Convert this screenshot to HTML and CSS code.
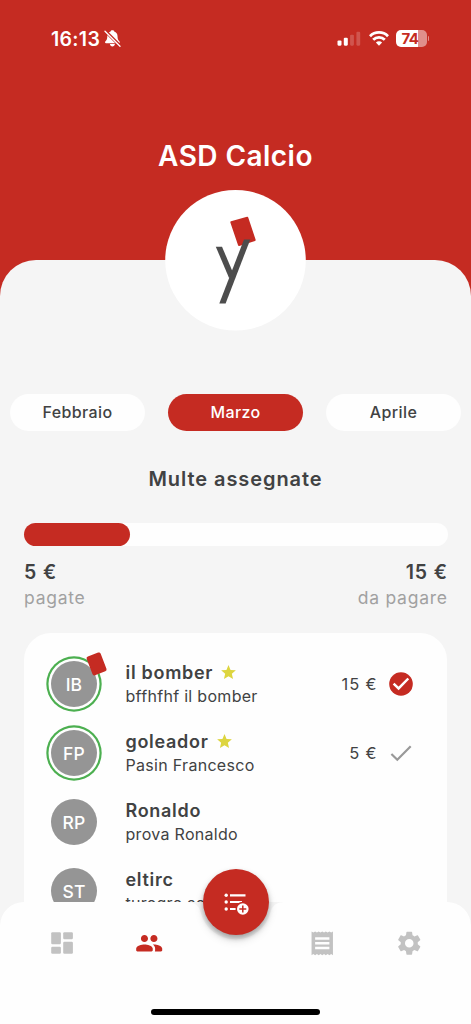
FILE: index.html
```html
<!DOCTYPE html>
<html lang="it">
<head>
<meta charset="utf-8">
<meta name="viewport" content="width=device-width, initial-scale=1">
<title>ASD Calcio</title>
<link rel="stylesheet" href="styles.css">
</head>
<body>
<div class="app">
  <header class="header">
    <div class="status">
      <div class="status-left">
        <span class="clock">16:13</span>
        <svg width="17" height="17" viewBox="0 0 17 17">
          <path fill="#fff" d="M8.4.3c1 0 1.700.5 1.800 1.300 2.100.7 3.300 2.400 3.300 4.500 0 3.200.7 4.200 2 5.400.6.600.2 1.700-.7 1.700H2c-.9 0-1.300-1.100-.7-1.700 1.300-1.200 2-2.200 2-5.400 0-2.100 1.200-3.800 3.300-4.500C6.700.8 7.400.3 8.400.3zM5.900 14.100h5c-.2 1.400-1.200 2.300-2.500 2.300s-2.300-.9-2.500-2.300z"/>
          <path stroke="#c52b22" stroke-width="3.200" d="M1 .8l15.500 15.400"/>
          <path stroke="#fff" stroke-width="1.300" stroke-linecap="round" d="M1 1.300l15 14.900"/>
        </svg>
      </div>
      <div class="status-right">
        <svg width="24" height="15" viewBox="0 0 24 15" fill="#fff">
          <rect x=".5" y="9.500" width="4" height="5.200" rx="1.100"/>
          <rect x="6.800" y="6.700" width="4" height="8" rx="1.100"/>
          <rect x="13.100" y="3.700" width="3.800" height="11" rx="1.100" opacity=".2"/>
          <rect x="19.400" y=".7" width="3.800" height="14" rx="1.100" opacity=".2"/>
        </svg>
        <svg class="wifi" width="20" height="15" viewBox="0 0 20 15" fill="none" stroke="#fff" stroke-width="2.800">
          <path d="M1 5.200a12.700 12.700 0 0 1 18 0"/>
          <path d="M4.200 8.700a8.200 8.200 0 0 1 11.600 0"/>
          <path fill="#fff" stroke="none" d="M10 14.700l-3.100-3.200a4.400 4.400 0 0 1 6.200 0z"/>
        </svg>
        <span class="battery">74</span><span class="battery-tip"></span>
      </div>
    </div>
    <h1 class="team">ASD Calcio</h1>
  </header>

  <main class="sheet">
    <svg class="logo" width="141" height="141" viewBox="0 0 141 141">
      <circle cx="70.500" cy="70.300" r="70.300" fill="#fff"/>
      <path d="M66.300 32.300L82.300 27.700L89.700 50L74 55Z" fill="#c52b22" stroke="#c52b22" stroke-width="2" stroke-linejoin="round"/>
      <rect fill="#4d4d4d" width="6.200" height="31" transform="translate(50.800 56.700) skewX(23)"/>
      <rect fill="#4d4d4d" y="-64" width="6.300" height="64" transform="translate(54.300 113.400) skewX(-21.100)"/>
    </svg>

    <nav class="months">
      <span class="month">Febbraio</span>
      <span class="month month-active">Marzo</span>
      <span class="month">Aprile</span>
    </nav>

    <h2 class="heading">Multe assegnate</h2>
    <div class="bar"><div class="bar-fill"></div></div>
    <div class="totals">
      <div><div class="amount">5 €</div><div class="caption">pagate</div></div>
      <div class="total-right"><div class="amount">15 €</div><div class="caption">da pagare</div></div>
    </div>

    <section class="card">
      <div class="row">
        <div class="avatar ring">IB<i class="red-card"></i></div>
        <div class="who">
          <div class="name">il bomber<svg class="star" viewBox="2 2 20 19"><path d="M12 17.270L18.180 21l-1.640-7.030L22 9.240l-7.190-.61L12 2 9.190 8.630 2 9.240l5.460 4.730L5.820 21z"/></svg></div>
          <div class="full">bffhfhf il bomber</div>
        </div>
        <div class="price">15 €</div>
        <svg width="24" height="24" viewBox="0 0 24 24"><circle cx="12" cy="12" r="11.800" fill="#c52b22"/><path d="M4.600 11.600l5 4.800 9.700-9.900" fill="none" stroke="#fff" stroke-width="2.500"/></svg>
      </div>
      <div class="row">
        <div class="avatar ring">FP</div>
        <div class="who">
          <div class="name">goleador<svg class="star" viewBox="2 2 20 19"><path d="M12 17.270L18.180 21l-1.640-7.030L22 9.240l-7.190-.61L12 2 9.190 8.630 2 9.240l5.460 4.730L5.820 21z"/></svg></div>
          <div class="full">Pasin Francesco</div>
        </div>
        <div class="price">5 €</div>
        <svg width="24" height="24" viewBox="0 0 24 24"><path d="M2.400 13l5.900 5.700L21.700 5.300" fill="none" stroke="#999" stroke-width="2.200"/></svg>
      </div>
      <div class="row">
        <div class="avatar">RP</div>
        <div class="who"><div class="name">Ronaldo</div><div class="full">prova Ronaldo</div></div>
      </div>
      <div class="row">
        <div class="avatar">ST</div>
        <div class="who"><div class="name">eltirc</div><div class="full">turegre se</div></div>
      </div>
    </section>
  </main>

  <footer class="tabs">
    <svg class="tabs-shape" width="471" height="122" viewBox="0 0 471 122"><path fill="#fefefe" d="M0 122V24A24 24 0 0 1 24 0H187Q198 0 200.500 10A36 36 0 0 0 270.500 10Q273 0 284 0H447A24 24 0 0 1 471 24V122Z"/></svg>
    <a class="tab"><svg width="28" height="28" viewBox="0 0 28 28" fill="#c2c2c2"><rect x="3.200" y="3.300" width="9.700" height="12" rx="1.200"/><rect x="3.200" y="17.700" width="9.700" height="7" rx="1.200"/><rect x="15.200" y="3.300" width="9.700" height="7" rx="1.200"/><rect x="15.200" y="12.700" width="9.700" height="12" rx="1.200"/></svg></a>
    <a class="tab"><svg width="28.400" height="28.400" viewBox="0 0 24 24" fill="#c52b22"><path d="M16 11c1.660 0 2.990-1.340 2.990-3S17.660 5 16 5s-3 1.340-3 3 1.340 3 3 3zm-8 0c1.660 0 2.990-1.340 2.990-3S9.660 5 8 5 5 6.340 5 8s1.340 3 3 3zm0 2c-2.330 0-7 1.170-7 3.500V18c0 .55.450 1 1 1h12c.55 0 1-.45 1-1v-1.500c0-2.330-4.670-3.500-7-3.500zm8 0c-.29 0-.62.020-.97.050 1.160.84 1.970 1.970 1.970 3.450V18c0 .35-.07.690-.18 1H22c.55 0 1-.45 1-1v-1.500c0-2.330-4.670-3.500-7-3.500z"/></svg></a>
    <span class="tab"><button class="fab" aria-label="Aggiungi multa"><svg width="28" height="28" viewBox="0 0 28 28">
      <g fill="#fff"><circle cx="4.200" cy="7.300" r="1.700"/><circle cx="4.200" cy="14" r="1.700"/><circle cx="4.200" cy="21" r="1.700"/></g>
      <path stroke="#fff" stroke-width="2.200" d="M8 7.300h15.500M8 14h12M8 21h6"/>
      <circle cx="20.800" cy="21" r="7.300" fill="#c52b22"/><circle cx="20.800" cy="21" r="5.800" fill="#fff"/>
      <path stroke="#c52b22" stroke-width="1.500" d="M17.300 21h7M20.800 17.500v7"/>
    </svg></button></span>
    <a class="tab"><svg width="28.500" height="28.500" viewBox="0 0 24 24" fill="#c2c2c2"><path d="M18 17H6v-2h12v2zm0-4H6v-2h12v2zm0-4H6V7h12v2zM3 22l1.500-1L6 22l1.500-1L9 22l1.500-1L12 22l1.500-1L15 22l1.500-1L18 22l1.500-1L21 22V2l-1.500 1L18 2l-1.500 1L15 2l-1.500 1L12 2l-1.500 1L9 2 7.500 3 6 2 4.500 3 3 2v20z"/></svg></a>
    <a class="tab"><svg width="28.500" height="28.500" viewBox="0 0 24 24" fill="#c2c2c2"><path d="M19.140 12.940c.04-.3.060-.61.060-.94 0-.32-.02-.64-.07-.94l2.030-1.580c.18-.14.230-.41.120-.61l-1.920-3.320c-.12-.22-.37-.29-.59-.22l-2.390.96c-.5-.38-1.030-.7-1.620-.94l-.36-2.540c-.04-.24-.24-.41-.48-.41h-3.840c-.24 0-.43.170-.47.410l-.36 2.540c-.59.240-1.130.570-1.620.940l-2.390-.96c-.22-.08-.47 0-.59.220L2.740 8.870c-.12.210-.08.470.12.610l2.030 1.580c-.05.300-.09.630-.09.940s.02.640.07.940l-2.030 1.580c-.18.140-.23.410-.12.610l1.920 3.320c.12.220.370.290.590.220l2.390-.96c.5.380 1.030.7 1.620.940l.36 2.540c.05.240.24.410.48.410h3.840c.24 0 .44-.17.470-.41l.36-2.540c.59-.24 1.130-.56 1.620-.94l2.390.96c.22.080.47 0 .59-.22l1.920-3.320c.12-.22.070-.47-.12-.61l-2.010-1.580zM12 15.600c-1.980 0-3.600-1.620-3.600-3.600s1.620-3.600 3.600-3.600 3.600 1.620 3.600 3.600-1.620 3.600-3.600 3.600z"/></svg></a>
    <div class="home-indicator"></div>
  </footer>
</div>
</body>
</html>
```

FILE: styles.css
```css
* { box-sizing: border-box; }
body { margin: 0; font-family: Inter, "Liberation Sans", sans-serif; color: #414243; }
svg { display: block; flex: none; }
h1, h2 { margin: 0; }

.app { width: 471px; height: 1024px; display: flex; flex-direction: column; overflow: hidden; background: #c52b22; }

.header { flex: none; height: 260px; color: #fff; }
.status { height: 77px; padding: 0 42px 0 51px; display: flex; align-items: center; justify-content: space-between; }
.status-left, .status-right { display: flex; align-items: center; }
.status-left { gap: 4px; }
.clock { font-size: 19.500px; font-weight: 600; letter-spacing: .3px; }
.wifi { margin: 0 7px 0 8px; }
.battery { width: 31px; height: 16.500px; border-radius: 5px; padding-left: 6px; background: linear-gradient(90deg, #fff 22px, #e08f8b 22px); color: #c52b22; font-size: 15px; font-weight: 700; line-height: 17px; letter-spacing: -.6px; }
.battery-tip { width: 1.500px; height: 5px; margin-left: 1px; border-radius: 0 2px 2px 0; background: #e08f8b; }
.team { margin-top: 49px; text-align: center; font-size: 28px; font-weight: 600; line-height: 60px; letter-spacing: .45px; }

.sheet { flex: 1; min-height: 0; display: flex; flex-direction: column; border-radius: 36px 36px 0 0; background: #f5f5f5; }
.logo { margin: -70.500px auto 0; }

.months { display: flex; justify-content: space-between; margin-top: 63px; padding: 0 10px; }
.month { width: 135px; height: 37.500px; border-radius: 19px; background: #fefefe; text-align: center; font-size: 16px; font-weight: 500; line-height: 36.500px; letter-spacing: .4px; }
.month-active { background: #c52b22; color: #fff; }

.heading { margin-top: 33px; text-align: center; font-size: 20px; font-weight: 600; line-height: 30px; letter-spacing: .93px; }
.bar { margin: 28.500px 23.500px 0; height: 23.500px; border-radius: 12px; background: #fefefe; }
.bar-fill { width: 106px; height: 100%; border-radius: 12px; background: #c52b22; }
.totals { display: flex; justify-content: space-between; margin: 13.500px 24px 0 24px; line-height: 25px; }
.total-right { text-align: right; }
.amount { font-size: 19.500px; font-weight: 600; letter-spacing: .9px; margin-right: -.9px; }
.caption { font-size: 17.500px; letter-spacing: .75px; margin-right: -.75px; color: #a1a1a1; }

.card { flex: 1; min-height: 0; overflow: hidden; margin: 23.500px 24px 0; padding: 16.500px 34.500px 0 23px; border-radius: 27px 27px 0 0; background: #fefefe; }
.row { display: flex; align-items: center; height: 69px; }
.avatar { position: relative; flex: none; width: 46px; height: 46px; margin: 0 28.500px 0 4px; border-radius: 50%; background: #959595; color: #fff; text-align: center; font-size: 17.500px; font-weight: 500; line-height: 48px; letter-spacing: .2px; }
.ring { box-shadow: 0 0 0 2.500px #fefefe, 0 0 0 4.700px #4caf50; }
.red-card { position: absolute; left: 38px; top: -7px; width: 14.500px; height: 19.500px; border-radius: 2px; background: #c52b22; transform: rotate(-21deg); }
.who { flex: 1; padding-top: 1px; white-space: nowrap; }
.name { display: flex; align-items: center; font-size: 18px; font-weight: 600; line-height: 24px; letter-spacing: .7px; }
.star { width: 15px; height: 14px; margin: -2px 0 0 8px; fill: #ddd53f; }
.full { font-size: 16px; line-height: 22.500px; letter-spacing: .3px; }
.price { margin-right: 11px; font-size: 16.500px; letter-spacing: .9px; }

.tabs { position: relative; flex: none; height: 122px; padding: 0 18.750px; display: flex; flex-wrap: wrap; justify-content: center; align-content: flex-start; background: linear-gradient(90deg, #f5f5f5 24px, #fefefe 24px, #fefefe 185px, #f5f5f5 185px, #f5f5f5 286px, #fefefe 286px, #fefefe 447px, #f5f5f5 447px); }
.tabs-shape { position: absolute; left: 0; top: 0; }
.tab { position: relative; width: 86.700px; height: 82px; display: flex; align-items: center; justify-content: center; }
.fab { display: flex; align-items: center; justify-content: center; flex: none; width: 66px; height: 66px; margin-bottom: 82px; padding: 0; border: 0; border-radius: 50%; background: #c52b22; box-shadow: 0 3px 5px rgba(0,0,0,.26), 0 5px 10px rgba(0,0,0,.13); }
.home-indicator { position: relative; width: 169px; height: 6px; margin-top: 24.500px; border-radius: 3px; background: #000; }
```
